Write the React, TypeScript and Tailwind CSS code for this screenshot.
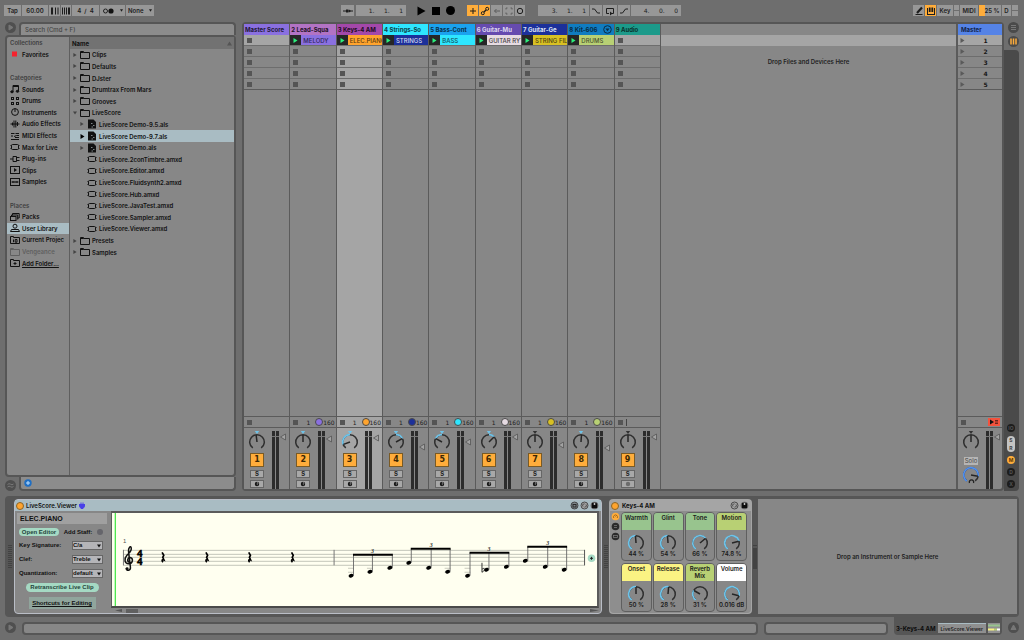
import React from 'react';
import clsx from 'clsx';

interface Track {
  name: string;
  color: string;
  text: string;
  clip?: string;
  clipBg?: string;
  clipText?: string;
  dot?: string;
  pan: number;
  blue: boolean;
  fader: number;
}

const TRACKS: Track[] = [
  { name: 'Master Score', color: 'bg-[#8a70e0]', text: 'text-[#1e1834]', pan: -7, blue: true, fader: 6 },
  { name: '2 Lead-Squa', color: 'bg-[#b273c4]', text: 'text-[#241428]', clip: 'MELODY', clipBg: 'bg-[#8a70e0]', clipText: 'text-[#2f2658]', dot: 'bg-[#8a70e0]', pan: 0, blue: true, fader: 8 },
  { name: '3 Keys-4 AM', color: 'bg-[#a348aa]', text: 'text-[#200c22]', clip: 'ELEC.PIANO', clipBg: 'bg-[#ffa42e]', clipText: 'text-[#59390f]', dot: 'bg-[#ffa42e]', pan: -110, blue: true, fader: 7 },
  { name: '4 Strings-So', color: 'bg-[#2ee6ff]', text: 'text-[#0d3f48]', clip: 'STRINGS', clipBg: 'bg-[#1c309a]', clipText: 'text-[#d5d9ee]', dot: 'bg-[#1c309a]', pan: 62, blue: true, fader: 16 },
  { name: '5 Bass-Cont', color: 'bg-[#1ba2ee]', text: 'text-[#0a3048]', clip: 'BASS', clipBg: 'bg-[#2ee6ff]', clipText: 'text-[#13535d]', dot: 'bg-[#2ee6ff]', pan: -62, blue: true, fader: 11 },
  { name: '6 Guitar-Mu', color: 'bg-[#664baf]', text: 'text-[#ddd8ee]', clip: 'GUITAR RYT', clipBg: 'bg-[#e6dbe2]', clipText: 'text-[#463f44]', dot: 'bg-[#e6dbe2]', pan: 45, blue: true, fader: 6 },
  { name: '7 Guitar-Ge', color: 'bg-[#1c309a]', text: 'text-[#dfe3f5]', clip: 'STRING FILL', clipBg: 'bg-[#d8c023]', clipText: 'text-[#4c440f]', dot: 'bg-[#d8c023]', pan: 0, blue: false, fader: 14 },
  { name: '8 Kit-606', color: 'bg-[#107cc0]', text: 'text-[#062c45]', clip: 'DRUMS', clipBg: 'bg-[#b8d074]', clipText: 'text-[#485330]', dot: 'bg-[#b8d074]', pan: 4, blue: true, fader: 17 },
  { name: '9 Audio', color: 'bg-[#1c9a8a]', text: 'text-[#08302b]', pan: 0, blue: false, fader: 6 },
];

const MACROS = [
  { name: 'Warmth', color: 'bg-[#98c48e]', value: '44 %', angle: -4 },
  { name: 'Glint', color: 'bg-[#98c48e]', value: '54 %', angle: -4 },
  { name: 'Tone', color: 'bg-[#98c48e]', value: '66 %', angle: 50 },
  { name: 'Motion', color: 'bg-[#b8d074]', value: '74.8 %', angle: 75 },
  { name: 'Onset', color: 'bg-[#faf383]', value: '50 %', angle: 0 },
  { name: 'Release', color: 'bg-[#faf383]', value: '28 %', angle: 5 },
  { name: 'Reverb Mix', color: 'bg-[#b8d074]', value: '31 %', angle: -60 },
  { name: 'Volume', color: 'bg-white', value: '0.016 dB', angle: 105 },
];

type SideRow = { label: string; icon?: string; kind?: 'head' | 'selected' | 'dim' | 'link' } | null;

const SIDEBAR: SideRow[] = [
  { label: 'Collections', kind: 'head' },
  { label: 'Favorites', icon: 'fav' },
  null,
  { label: 'Categories', kind: 'head' },
  { label: 'Sounds', icon: 'notes' },
  { label: 'Drums', icon: 'drums' },
  { label: 'Instruments', icon: 'clock' },
  { label: 'Audio Effects', icon: 'wave' },
  { label: 'MIDI Effects', icon: 'midi' },
  { label: 'Max for Live', icon: 'max' },
  { label: 'Plug-ins', icon: 'plug' },
  { label: 'Clips', icon: 'clip' },
  { label: 'Samples', icon: 'sample' },
  null,
  { label: 'Places', kind: 'head' },
  { label: 'Packs', icon: 'packs' },
  { label: 'User Library', icon: 'user', kind: 'selected' },
  { label: 'Current Projec', icon: 'project' },
  { label: 'Vengeance', icon: 'folder', kind: 'dim' },
  { label: 'Add Folder...', icon: 'add', kind: 'link' },
];

const FILES = [
  { label: 'Clips', type: 'folder' },
  { label: 'Defaults', type: 'folder' },
  { label: 'DJster', type: 'folder' },
  { label: 'Drumtrax From Mars', type: 'folder' },
  { label: 'Grooves', type: 'folder' },
  { label: 'LiveScore', type: 'open' },
  { label: 'LiveScore Demo-9.5.als', type: 'set' },
  { label: 'LiveScore Demo-9.7.als', type: 'set', selected: true },
  { label: 'LiveScore Demo.als', type: 'set' },
  { label: 'LiveScore.2conTimbre.amxd', type: 'max' },
  { label: 'LiveScore.Editor.amxd', type: 'max' },
  { label: 'LiveScore.Fluidsynth2.amxd', type: 'max' },
  { label: 'LiveScore.Hub.amxd', type: 'max' },
  { label: 'LiveScore.JavaTest.amxd', type: 'max' },
  { label: 'LiveScore.Sampler.amxd', type: 'max' },
  { label: 'LiveScore.Viewer.amxd', type: 'max' },
  { label: 'Presets', type: 'folder' },
  { label: 'Samples', type: 'folder' },
];

const ICONS: Record<string, React.ReactNode> = {
  fav: <rect x="2" y="2.500" width="5" height="5" fill="#f5222d" stroke="none" />,
  notes: (
    <>
      <path d="M3 7.500V1.500H8.500V7" />
      <path d="M3 2.500H8.500" />
      <ellipse cx="2" cy="7.800" rx="1.300" ry="1" fill="currentColor" />
      <ellipse cx="7.500" cy="7.300" rx="1.300" ry="1" fill="currentColor" />
    </>
  ),
  drums: (
    <>
      <rect x="1.500" y="1.500" width="2" height="2" />
      <rect x="6.500" y="1.500" width="2" height="2" />
      <rect x="1.500" y="6.500" width="2" height="2" />
      <rect x="6.500" y="6.500" width="2" height="2" />
    </>
  ),
  clock: (
    <>
      <circle cx="5" cy="5" r="3.400" />
      <path d="M5 1.500V5" />
    </>
  ),
  wave: <path d="M0.500 5H9.500M2.500 3.500V6.500M4 1.500V8.500M5.800 1.500V8.500M7.500 3V7" />,
  midi: <path d="M1 2.500H4.500M5.500 2.500H9M1 5H3M4 5.500L6.500 4.500H9M1 8.500H9M5 6.500H9" />,
  max: (
    <>
      <rect x="1.500" y="2.500" width="7" height="5" rx="1" />
      <path d="M0.500 3.500H1.500M0.500 6.500H1.500M8.500 3.500H9.500M8.500 6.500H9.500" />
    </>
  ),
  plug: <path d="M0 5H3M3 2.500H6.500V7.500H3ZM6.500 3.500H9.500M6.500 6.500H9.500" />,
  clip: (
    <>
      <rect x="0.500" y="1.500" width="9" height="7" />
      <path d="M4 3L7 5L4 7Z" fill="currentColor" stroke="none" />
    </>
  ),
  sample: (
    <>
      <rect x="0.500" y="1.500" width="9" height="7" />
      <path d="M1.500 5H8.500M3 4V6M5 4.500V5.500M7 4V6" />
    </>
  ),
  packs: (
    <>
      <path d="M2.500 3.500V1.500H9.200V6H7.500" />
      <path d="M1.500 4.500V3H7.700V7.500" />
      <rect x="0.500" y="4.500" width="5.500" height="4" />
    </>
  ),
  user: (
    <>
      <circle cx="5" cy="3.200" r="2" />
      <path d="M0.500 8.500H9.500L8.500 6.500H1.500Z" />
    </>
  ),
  project: (
    <>
      <path d="M0.500 8.500V1.500H3.500V2.500H9.500V8.500Z" />
      <path d="M3.500 4.500V7.200M5.200 4.500H7V7.200H5.200Z" />
    </>
  ),
  folder: <path d="M0.500 8.500V1.500H3.500V2.500H9.500V8.500ZM0.500 2.500H3.500" />,
  add: (
    <>
      <path d="M0.500 8.500V1.500H3.500V2.500H9.500V8.500Z" />
      <path d="M5 4V7M3.500 5.500H6.500" />
    </>
  ),
  set: (
    <>
      <path d="M1 0.500H6.500L9 3V9.500H1Z" fill="currentColor" stroke="none" />
      <path d="M4 4.500H5.500M6 6.500H7.500M4.500 8H6" stroke="#7f8688" />
    </>
  ),
};

function Icon({ name, className }: { name: string; className?: string }) {
  return (
    <svg viewBox="0 0 10 10" className={clsx('size-[10px] shrink-0', className)} fill="none" stroke="currentColor" strokeWidth="1" aria-hidden="true">
      {ICONS[name]}
    </svg>
  );
}

function Arrow({ open, className, size = 'size-[5px]' }: { open?: boolean; className?: string; size?: string }) {
  return (
    <svg viewBox="0 0 5 5" className={clsx('shrink-0', size, className)} fill="currentColor" aria-hidden="true">
      <path d={open ? 'M0 0.500H5L2.500 4.500Z' : 'M0.500 0L4.500 2.500L0.500 5Z'} />
    </svg>
  );
}

const point = (angle: number, r: number, c = 10) => {
  const a = (angle * Math.PI) / 180;
  return `${(c + r * Math.sin(a)).toFixed(2)} ${(c - r * Math.cos(a)).toFixed(2)}`;
};

const arc = (from: number, to: number, r: number) =>
  `M${point(from, r)}A${r} ${r} 0 ${to - from > 180 ? 1 : 0} 1 ${point(to, r)}`;

interface KnobProps {
  label: string;
  angle: number;
  bipolar?: boolean;
  marker?: string;
  color?: string;
}

function Knob({ label, angle, bipolar, marker, color = '#6fc3e8' }: KnobProps) {
  const start = bipolar ? Math.min(0, angle) : -145;
  const end = bipolar ? Math.max(0, angle) : angle;
  return (
    <label className="relative block size-5">
      <svg viewBox="0 0 20 20" className="size-5 overflow-visible" fill="none" strokeWidth="1.500">
        <path d={arc(-145, 145, 7.3)} stroke="#2f2f2f" />
        {end - start > 8 && <path d={arc(start, end, 7.3)} stroke={color} strokeWidth="1.700" />}
        <path d={`M10 10L${point(angle, 7)}`} stroke="#262626" />
        {marker && <path d="M7.800 -1H12.200L10 2Z" fill={marker} />}
      </svg>
      <input type="range" min={-145} max={145} defaultValue={angle} aria-label={label} className="absolute inset-0 size-5 cursor-pointer opacity-0" />
    </label>
  );
}

function Meter({ fader }: { fader: number }) {
  return (
    <svg viewBox="0 0 15 58" className="h-[58px] w-[15px]" aria-hidden="true">
      <rect width="3" height="58" fill="#2c2c2c" />
      <rect x="4" width="3" height="58" fill="#2c2c2c" />
      <path d="M0 5.500H7" stroke="#777" />
      <path d={`M8.500 ${fader}L13.500 ${fader - 3}V${fader + 3}Z`} fill="#a2a2a2" stroke="#555" strokeWidth="0.800" />
    </svg>
  );
}

function StopSquare() {
  return <span className="block size-[5px] shrink-0 bg-[#555]" />;
}

function TrackColumn({ track, index }: { track: Track; index: number }) {
  const selected = index === 2;
  return (
    <section className={clsx('flex min-w-0 flex-col border-r border-[#5b5b5b]', selected ? 'bg-[#a5a5a5]' : 'bg-[#878787]')}>
      <h2 className={clsx('flex h-[11px] items-center overflow-hidden whitespace-nowrap pl-px font-bold', track.color, track.text)}>
        <span className="flex-1">{track.name}</span>
        {index === 7 && (
          <svg viewBox="0 0 9 9" className="mr-0.5 size-[9px]" fill="none" stroke="#0b2c44" aria-hidden="true">
            <circle cx="4.500" cy="4.500" r="3.800" />
            <path d="M2.500 3.500H6.500L4.500 6.200Z" fill="#0b2c44" stroke="none" />
          </svg>
        )}
      </h2>
      {[0, 1, 2, 3, 4].map(row => (
        <div key={row} className={clsx('flex h-[11px] items-center border-b', row === 4 ? 'border-[#5b5b5b]' : 'border-[#6d6d6d]', row === 0 && 'bg-[#a5a5a5]')}>
          {row === 0 && track.clip ? (
            <button className="flex h-full w-full min-w-0 items-center text-left">
              <span className="flex h-full w-[11px] shrink-0 items-center justify-center bg-[#262626]">
                <Arrow className="text-[#2bf07c]" />
              </span>
              <span className={clsx('flex h-full min-w-0 flex-1 items-center overflow-hidden whitespace-nowrap pl-0.5 font-medium', track.clipBg, track.clipText)}>
                {track.clip}
              </span>
            </button>
          ) : (
            <button aria-label="Stop clip" className="pl-[3px]">
              <StopSquare />
            </button>
          )}
        </div>
      ))}
      <div className="flex-1" />
      <div className="flex h-3 items-center border-y border-[#5b5b5b] pl-[3px]">
        <StopSquare />
        {track.dot && (
          <div className="flex flex-1 items-center justify-end pr-px font-['DejaVu_Sans',sans-serif] text-[#1d1d1d]">
            <span className="pr-[5px]">1</span>
            <span className={clsx('size-2 shrink-0 rounded-full border border-[#4a4a4a]', track.dot)} />
            <span>160</span>
          </div>
        )}
        {index === 8 && <span className="ml-[3px] h-[7px] w-px bg-[#444]" />}
      </div>
      <div className="flex h-[61px] gap-[5px] pl-[3px] pt-[3px]">
        <div className="flex w-5 flex-col items-center pt-px">
          <Knob label={`${track.name} pan`} angle={track.pan} bipolar marker={track.blue ? '#6fc3e8' : '#333'} />
          <button className="mt-px h-3.5 w-3.5 shrink-0 border border-[#7a5a24] bg-[#ffad3b] font-['DejaVu_Sans',sans-serif] text-[8px] font-bold leading-3 text-[#3b2704]">
            {index + 1}
          </button>
          <button className="mt-[3px] h-2 w-3.5 shrink-0 border border-[#666] bg-[#a8a8a8] text-[6px] font-bold leading-[6px] text-[#222]">S</button>
          <button aria-label="Arm" className="mt-0.5 flex h-2 w-3.5 shrink-0 items-center justify-center border border-[#666] bg-[#a8a8a8]">
            <svg viewBox="0 0 6 6" className="size-[6px]">
              <circle cx="3" cy="3" r="2.200" fill={index === 8 ? '#6c6c6c' : '#151515'} />
              {index !== 8 && <path d="M3.300 1.300V4.200M3.300 1.500L4.500 2.300" stroke="#aaa" strokeWidth="0.600" />}
            </svg>
          </button>
        </div>
        <Meter fader={track.fader} />
      </div>
    </section>
  );
}

function MasterColumn() {
  return (
    <section className="flex w-[46px] shrink-0 flex-col border-l-2 border-[#5b5b5b]">
      <h2 className="flex h-[11px] items-center bg-[#5583e6] pl-[3px] font-bold text-[#13244a]">Master</h2>
      {[1, 2, 3, 4, 5].map(scene => (
        <button key={scene} className={clsx('flex h-[11px] items-center border-b pl-0.5 text-[#161616]', scene === 5 ? 'border-[#5b5b5b]' : 'border-[#6d6d6d]', scene === 1 && 'bg-[#a5a5a5]')}>
          <Arrow className="text-[#5a5a5a]" />
          <span className="flex-1 pl-1 text-center font-['DejaVu_Sans',sans-serif] font-bold">{scene}</span>
        </button>
      ))}
      <div className="flex-1" />
      <div className="flex h-3 items-center justify-between border-y border-[#5b5b5b] pl-[3px] pr-0.5">
        <StopSquare />
        <button aria-label="Back to arrangement" className="flex h-2 w-3 items-center justify-center bg-[#f4523d]">
          <svg viewBox="0 0 10 6" className="h-1.5 w-2.5">
            <path d="M1 0.500L5 3L1 5.500Z" fill="#111" />
            <path d="M6 1.500H9M6 3H9M6 4.500H9" stroke="#4b1a14" strokeWidth="0.800" />
          </svg>
        </button>
      </div>
      <div className="flex h-[61px] gap-[5px] pl-[3px] pt-[3px]">
        <div className="flex w-5 flex-col items-center pt-px">
          <Knob label="Master pan" angle={0} bipolar marker="#333" />
          <button className="mt-[5px] h-2 w-3.5 shrink-0 bg-[#b5b5b5] text-[6px] leading-[8px] text-[#444]">Solo</button>
          <div className="relative">
            <Knob label="Cue volume" angle={100} color="#4f8ff0" />
            <svg viewBox="0 0 7 7" className="absolute bottom-0 left-[7px] size-[7px]" aria-hidden="true">
              <path d="M1.500 5A2.200 2.200 0 1 1 5.500 5" fill="none" stroke="#222" strokeWidth="1.300" />
            </svg>
          </div>
        </div>
        <Meter fader={6} />
      </div>
    </section>
  );
}

function RoundIcon({ children, className, label }: { children: React.ReactNode; className?: string; label: string }) {
  return (
    <button aria-label={label} className={clsx('size-[11px] shrink-0 rounded-full', className)}>
      <svg viewBox="0 0 11 11" className="size-[11px]" fill="none" stroke="currentColor">
        {children}
      </svg>
    </button>
  );
}

function HotSwap({ className }: { className?: string }) {
  return (
    <RoundIcon label="Hot-swap" className={className}>
      <circle cx="5.500" cy="5.500" r="3.500" fill="#a5a5a5" stroke="#333" strokeWidth="0.800" />
      <path d="M4 6.500A1.700 1.700 0 0 1 5.500 3.800M7 4.500A1.700 1.700 0 0 1 5.500 7.200" stroke="#333" strokeWidth="0.900" />
    </RoundIcon>
  );
}

function Save() {
  return (
    <RoundIcon label="Save" className="-ml-px">
      <circle cx="5.500" cy="5.500" r="3.800" fill="#5c5c5c" stroke="none" />
      <path d="M3 3H7.500L8 3.500V8H3Z" fill="#0c0c0c" stroke="none" />
      <path d="M5.500 3V5" stroke="#c4c4c4" strokeWidth="1.500" />
    </RoundIcon>
  );
}

function ToolButton({ children, className, label, lit }: { children: React.ReactNode; className?: string; label?: string; lit?: boolean }) {
  return (
    <button aria-label={label} className={clsx('flex h-[11px] shrink-0 items-center justify-center', lit ? 'bg-[#ffad3b]' : 'bg-[#979797]', className)}>
      {children}
    </button>
  );
}

function Glyph({ children }: { children: React.ReactNode }) {
  return (
    <svg viewBox="0 0 10 10" className="size-[10px]" fill="none" stroke="currentColor" aria-hidden="true">
      {children}
    </svg>
  );
}

function Toolbar() {
  const field = "h-[11px] shrink-0 bg-[#979797] px-[3px] text-right font-['DejaVu_Sans',sans-serif] font-normal outline-none";
  return (
    <header className="grid h-[21px] shrink-0 grid-cols-[1fr_auto_1fr] items-center pl-1 pr-1.5 font-semibold text-[#1d1d1d]">
      <div className="flex gap-px">
        <ToolButton className="w-[17px]">Tap</ToolButton>
        <input aria-label="Tempo" defaultValue="60.00" className="h-[11px] w-[26px] bg-[#979797] text-center outline-none" />
        <ToolButton className="w-[11px]" label="Nudge down">
          <Glyph><path d="M2 1.500V8.500" strokeWidth="2" /><path d="M5.500 1.500V8.500M8 1.500V8.500" /></Glyph>
        </ToolButton>
        <ToolButton className="w-2.5" label="Nudge up">
          <Glyph><path d="M1.500 1.500V8.500M3.500 1.500V8.500M5.500 1.500V8.500" /><path d="M8 1.500V8.500" strokeWidth="2" /></Glyph>
        </ToolButton>
        <input aria-label="Time signature" defaultValue="4  /  4" className="h-[11px] w-[27px] bg-[#979797] text-center outline-none" />
        <ToolButton className="w-[25px] gap-1.5" label="Metronome">
          <svg viewBox="0 0 11 6" className="h-1.5 w-[11px]"><circle cx="2.500" cy="3" r="2" fill="none" stroke="#222" /><circle cx="8" cy="3" r="2.600" fill="#111" /></svg>
          <Arrow open size="size-[3px]" />
        </ToolButton>
        <div className="flex h-[11px] items-center bg-[#979797] pr-0.5">
          <select aria-label="Quantization" className="h-[11px] w-[23px] appearance-none pl-0.5 outline-none">
            <option>None</option>
          </select>
          <Arrow open size="size-[3px]" />
        </div>
      </div>

      <div className="flex items-center">
        <ToolButton className="w-[13px]" label="Follow"><Glyph><path d="M0 5H10" /><path d="M3 5H5.500" strokeWidth="3" /><path d="M8 5L6 3.500V6.500Z" fill="currentColor" stroke="none" /></Glyph></ToolButton>
        <input aria-label="Position" defaultValue="1.     1.     1" className={clsx(field, 'ml-0.5 w-[50px]')} />
        <button aria-label="Play" className="ml-[11px]"><svg viewBox="0 0 9 10" className="h-2.5 w-[9px]"><path d="M0.500 0.500L8.500 5L0.500 9.500Z" fill="#000" /></svg></button>
        <button aria-label="Stop" className="ml-1.5 size-2 bg-black" />
        <button aria-label="Record" className="ml-1.5 size-[9px] rounded-full bg-black" />
        <div className="ml-3 flex gap-px">
          <ToolButton lit className="w-[11px]" label="Overdub"><Glyph><path d="M5 2V8M2 5H8" /></Glyph></ToolButton>
          <ToolButton lit className="w-[11px]" label="Automation arm"><Glyph><circle cx="2.800" cy="7.200" r="1.500" /><circle cx="7.200" cy="2.800" r="1.500" /><path d="M4 6L6 4" strokeWidth="1.500" /></Glyph></ToolButton>
          <ToolButton className="w-[11px] text-[#5c5c5c]" label="Re-enable automation"><Glyph><path d="M8 5H2.500M4.500 3L2.500 5L4.500 7" /></Glyph></ToolButton>
          <ToolButton className="w-[11px] text-[#5c5c5c]" label="Capture"><Glyph><path d="M2 3.500V2H3.500M6.500 2H8V3.500M8 6.500V8H6.500M3.500 8H2V6.500" /></Glyph></ToolButton>
          <ToolButton className="w-2.5" label="Session record"><Glyph><circle cx="5" cy="5" r="2.700" /></Glyph></ToolButton>
        </div>
        <input aria-label="Loop start" defaultValue="3.     1.     1" className={clsx(field, 'ml-[13px] w-[51px]')} />
        <div className="flex gap-px pl-px">
          <ToolButton className="w-3" label="Punch in"><Glyph><path d="M1 3H3.500L6.500 7H9" /></Glyph></ToolButton>
          <ToolButton className="w-3.5" label="Loop"><Glyph><path d="M4 7.500H1.500V2.500H8.500V7.500H6" /><path d="M5 5.500V9.500L7.500 7.500Z" fill="currentColor" stroke="none" /></Glyph></ToolButton>
          <ToolButton className="w-3" label="Punch out"><Glyph><path d="M1 7H3.500L6.500 3H9" /></Glyph></ToolButton>
          <input aria-label="Loop length" defaultValue="4.     0.     0" className={clsx(field, 'w-[50px]')} />
        </div>
      </div>

      <div className="flex justify-end gap-px">
        <ToolButton className="w-[11px]" label="Draw mode"><Glyph><path d="M3 7L8 1.500" strokeWidth="2.200" /><path d="M1.500 8.500H8.500" /></Glyph></ToolButton>
        <ToolButton lit className="w-[11px]" label="Computer keyboard"><Glyph><path d="M1.500 8.500V2M8.500 8.500V2M1 8.500H9" /><path d="M3.700 1.500V6M6.300 1.500V6" strokeWidth="1.800" /></Glyph></ToolButton>
        <ToolButton className="w-4">Key</ToolButton>
        <span className="flex h-[11px] w-[5px] flex-col justify-center bg-[#979797]"><span className="h-px bg-[#6e6e6e]" /></span>
        <ToolButton className="w-[18px]">MIDI</ToolButton>
        <span className="flex h-[11px] w-[22px] items-center justify-center bg-linear-to-r from-[#ffad3b] from-25% to-[#979797] to-25% pl-1">25 %</span>
        <ToolButton className="w-[9px]">D</ToolButton>
        <span className="flex h-[11px] w-1.5 flex-col justify-center bg-[#979797]"><span className="h-px bg-[#6e6e6e]" /></span>
      </div>
    </header>
  );
}

function Browser() {
  return (
    <aside className="flex w-[231px] shrink-0 flex-col">
      <div className="flex h-[13px] shrink-0 justify-between">
        <RoundIcon label="Preview" className="bg-[#4f4f4f] text-[#777]"><path d="M4 3L8 5.500L4 8Z" fill="currentColor" /></RoundIcon>
        <div className="w-[217px] rounded-t-sm border-2 border-b-0 border-[#565656] bg-[#8c8c8c]">
          <input aria-label="Search" placeholder="Search (Cmd + F)" className="block h-[11px] w-full bg-transparent pl-1 font-medium outline-none placeholder:text-[#454545]" />
        </div>
      </div>
      <div className="flex flex-1 rounded-sm border-2 border-[#565656] bg-[#878787] font-semibold">
        <nav className="w-[63px] shrink-0 border-r border-[#5f5f5f]">
          <ul className="grid h-[232px] auto-rows-fr">
            {SIDEBAR.map((row, i) => (
              <li key={i}>
                {row && (
                  <a
                    href="#"
                    className={clsx(
                      'flex h-full items-center overflow-hidden whitespace-nowrap pl-[3px]',
                      row.kind === 'head' && 'text-[#3f3f3f]',
                      row.kind === 'selected' && 'bg-[#a9bcc3] text-[#111]',
                      row.kind === 'dim' && 'text-[#606060]',
                      row.kind === 'link' && 'text-[#111]',
                      !row.kind && 'text-[#111]'
                    )}
                  >
                    {row.icon && <Icon name={row.icon} className="mr-0.5" />}
                    <span className={clsx(row.kind === 'link' && 'underline underline-offset-1')}>{row.label}</span>
                  </a>
                )}
              </li>
            ))}
          </ul>
        </nav>
        <div className="min-w-0 flex-1">
          <div className="flex h-3 items-center justify-between bg-[#727272] px-0.5 font-bold text-[#111]">
            Name
            <svg viewBox="0 0 5 5" className="size-[5px]"><path d="M0 4.500L2.500 0.500L5 4.500Z" fill="#555" /></svg>
          </div>
          <ul className="grid h-[209px] auto-rows-fr">
            {FILES.map(file => {
              const nested = file.type === 'set' || file.type === 'max';
              return (
                <li key={file.label} className={clsx('flex items-center text-[#111]', nested ? 'pl-2.5' : 'pl-[3px]', file.selected && 'bg-[#a9bcc3]')}>
                  {file.type === 'max' ? (
                    <span className="w-[5px]" />
                  ) : (
                    <Arrow open={file.type === 'open'} size={file.selected ? 'size-[5px]' : 'size-1 mr-px'} className={file.selected ? 'text-black' : 'text-[#444]'} />
                  )}
                  <Icon name={nested ? file.type : 'folder'} className={nested ? 'mx-0.5' : 'mx-0.5'} />
                  <span>{file.label}</span>
                </li>
              );
            })}
          </ul>
        </div>
      </div>
      <div className="flex h-3.5 shrink-0 items-end justify-between">
        <RoundIcon label="Groove pool" className="bg-[#4f4f4f] text-[#777]">
          <path d="M2.500 4.500Q4 3 5.500 4.200T8.500 4M2.500 7Q4 5.500 5.500 6.700T8.500 6.500" />
        </RoundIcon>
        <div className="flex h-full w-[217px] items-center rounded-b-sm border-2 border-t-0 border-[#565656] bg-[#8c8c8c] pl-[3px]">
          <svg viewBox="0 0 8 8" className="size-2"><circle cx="4" cy="4" r="3.700" fill="#1f6fc4" /><path d="M4 2V6M2 4H6" stroke="#bfe0ff" /></svg>
        </div>
      </div>
    </aside>
  );
}

function Session() {
  return (
    <main className="ml-1.5 flex min-w-0 flex-1 rounded-sm border-2 border-[#565656] bg-[#878787]">
      <div className="grid w-[417px] shrink-0 grid-cols-9">
        {TRACKS.map((track, i) => (
          <TrackColumn key={track.name} track={track} index={i} />
        ))}
      </div>
      <div className="min-w-0 flex-1 pt-[11px]">
        <div className="h-[11px] bg-[#a5a5a5]" />
        <p className="pt-[11px] text-center font-semibold text-[#1f1f1f]">Drop Files and Devices Here</p>
      </div>
      <MasterColumn />
    </main>
  );
}

function RightStrip() {
  const dark = 'bg-[#1d1d1d] text-[#555]';
  const toggles = [
    { t: 'IO', c: clsx(dark, 'rounded-full mb-1') },
    { t: 'S', c: 'bg-[#c4c4c4] text-[#444] rounded-t-full' },
    { t: 'R', c: 'bg-[#c4c4c4] text-[#444] rounded-b-full mb-1' },
    { t: 'M', c: 'bg-[#ffad3b] text-[#5c3a06] rounded-full mb-1' },
    { t: 'D', c: clsx(dark, 'rounded-full mb-1') },
    { t: 'X', c: clsx(dark, 'rounded-full') },
  ];
  return (
    <div className="flex w-[15px] shrink-0 flex-col">
      <div className="flex h-7 flex-col items-end gap-[3px]">
        <RoundIcon label="Arrangement view" className="bg-[#4a4a4a] text-[#777]"><path d="M3 3.500H8M3 5.500H8M3 7.500H8" /></RoundIcon>
        <RoundIcon label="Session view" className="bg-[#4a4a4a] text-[#ffad3b]"><path d="M3 2.500V8.500M5.500 2.500V8.500M8 2.500V8.500" strokeWidth="1.500" /></RoundIcon>
      </div>
      <div className="flex flex-1 flex-col items-center justify-end rounded-r-sm bg-[#4a4a4a] pb-[3px] pr-px">
        {toggles.map(({ t, c }) => (
          <button key={t} className={clsx('h-2 w-2 text-[5px] font-bold leading-[8px]', c)}>{t}</button>
        ))}
      </div>
    </div>
  );
}

const STAFF = [37, 41, 44, 48, 52];
const GROUPS = [
  { beam: 42, notes: [[240, 63], [259, 59], [279, 55]] },
  { beam: 36, notes: [[298, 50], [318, 55], [337, 59]] },
  { beam: 40, notes: [[357, 63], [376, 57], [396, 54]] },
  { beam: 34, notes: [[415, 48], [435, 54], [454, 57]] },
];

function Score() {
  return (
    <svg viewBox="0 0 487 95" preserveAspectRatio="xMinYMin slice" className="h-full w-full" fill="none" role="img" aria-label="Score">
      <path d="M2.500 0V95" stroke="#c5f7c0" />
      <path d="M3.500 0V95" stroke="#4be84b" />
      {STAFF.map(y => (
        <path key={y} d={`M11 ${y + 0.5}H475`} stroke="#c3c5b8" />
      ))}
      <path d="M11.500 37V52.500M223 37V52.500" stroke="#777" />
      <path d="M474.500 37V52.500" stroke="#555" />
      <text x="11" y="30" fontSize="6" fill="#555" fontFamily="Liberation Sans, sans-serif">1</text>
      {/* treble clef */}
      <path d="M17.500 49.500C14.800 48.600 15.400 44.500 18.200 44.800C21.500 45.200 21.400 50.800 17 51C12.500 51.200 11.800 46 15 42.500C17.500 39.800 20 38 19.300 35C18.700 32.600 16.300 34.500 16.600 38.500L18.500 54.500C18.800 58 14.600 58.600 14.300 56" stroke="#111" strokeWidth="1.500" strokeLinecap="round" />
      <circle cx="15.200" cy="56" r="1.500" fill="#111" />
      <text fontSize="11" fontWeight="bold" fill="#000" stroke="#000" strokeWidth="0.500" fontFamily="Liberation Serif, serif">
        <tspan x="25" y="44.500">4</tspan>
        <tspan x="25" y="52.500">4</tspan>
      </text>
      {[51, 95, 138, 181].map(x => (
        <path key={x} d={`M${x - 0.7} 39.500L${x + 1} 42.500L${x} 44.500L${x + 1.2} 47.200C${x - 1} 46.500 ${x - 1.2} 48 ${x + 0.2} 49.500`} stroke="#000" strokeWidth="1.700" />
      ))}
      {GROUPS.map(({ beam, notes }) => (
        <g key={beam}>
          {notes.map(([x, y]) => (
            <g key={x}>
              {y >= 55 && <path d={`M${x - 3} 55.500H${x + 3}`} stroke="#c9cbbd" />}
              {y >= 59 && <path d={`M${x - 3} 59.500H${x + 3}`} stroke="#c9cbbd" />}
              <path d={`M${x + 2.5} ${y}V${beam}`} stroke="#666" strokeWidth="0.900" />
              <ellipse cx={x} cy={y} rx="2.500" ry="1.800" fill="#000" transform={`rotate(-20 ${x} ${y})`} />
            </g>
          ))}
          <path d={`M${notes[0][0] + 2} ${beam}H${notes[2][0] + 3}`} stroke="#000" strokeWidth="2" />
          <text x={notes[1][0] + 1} y={beam - 2} fontSize="6" fontStyle="italic" fontWeight="bold" fill="#333" fontFamily="Liberation Serif, serif">3</text>
        </g>
      ))}
      <path d="M371.500 50V59.500C375 58 374.500 54 371.500 56.500" stroke="#222" strokeWidth="0.900" />
      <circle cx="481.500" cy="45.500" r="3.800" fill="#a5d9c3" />
      <path d="M481.500 44V47M480 45.500H483" stroke="#222" />
    </svg>
  );
}

function ViewerDevice() {
  const selects = [
    { id: 'key', label: 'Key Signature:', value: 'C/a' },
    { id: 'clef', label: 'Clef:', value: 'Treble' },
    { id: 'quant', label: 'Quantization:', value: 'default' },
  ];
  return (
    <section className="flex min-w-0 flex-1 flex-col rounded-sm border border-[#b9bdc6] bg-[#878787]">
      <div className="flex h-[11px] shrink-0 items-center bg-[#a9bcc3] px-px font-semibold text-[#111]">
        <button aria-label="Device on" className="mr-0.5 size-2 rounded-full border border-[#8b6426] bg-[#ffa42e]" />
        LiveScore.Viewer
        <svg viewBox="0 0 6 7" className="ml-0.5 h-[7px] w-1.5"><path d="M0.500 2V4.500L2 6.500H4L5.500 4.500V2M2 0.500V4M4 0.500V4" stroke="#4840e8" fill="#4840e8" /></svg>
        <div className="ml-auto flex">
          <RoundIcon label="Edit">
            <circle cx="5.500" cy="5.500" r="3.500" fill="#7c8488" stroke="#333" strokeWidth="0.800" />
            <rect x="4" y="4.500" width="3" height="2.500" stroke="#222" strokeWidth="0.900" />
          </RoundIcon>
          <HotSwap className="-ml-px" />
          <Save />
        </div>
      </div>
      <div className="flex min-h-0 flex-1 pr-0.5">
        <div className="flex w-[96px] shrink-0 flex-col pl-0.5 pr-1 pt-0.5 font-['Liberation_Sans',sans-serif] font-bold text-[#111]">
          <h3 className="flex h-[11px] items-center bg-[#a0a0a0] pl-[3px] text-[7px]">ELEC.PIANO</h3>
          <div className="mt-1 flex items-center justify-between pl-0.5 pr-1">
            <button className="h-2 w-10 rounded-full bg-[#a5d9c3] text-[6px] leading-[8px] text-[#24443a]">Open Editor</button>
            <label htmlFor="add-staff" className="text-[6px] leading-[8px]">Add Staff:</label>
            <input id="add-staff" type="checkbox" className="size-1.5 appearance-none rounded-full bg-[#65656b]" />
          </div>
          <div className="mt-[5px] flex flex-col gap-[5px] pl-0.5 pr-1">
            {selects.map(({ id, label, value }) => (
              <div key={id} className="flex items-center justify-between text-[6px] leading-[9px]">
                <label htmlFor={id}>{label}</label>
                <span className="flex h-[9px] w-[31px] items-center border border-[#666] bg-[#b5b5b8]">
                  <select id={id} className="h-full min-w-0 flex-1 appearance-none text-[6px] leading-[7px] outline-none">
                    <option>{value}</option>
                  </select>
                  <Arrow open size="size-1" className="mr-px" />
                </span>
              </div>
            ))}
          </div>
          <button className="mx-auto mt-[5px] h-[9px] w-[73px] rounded-full bg-[#a5d9c3] text-[6px] leading-[9px] text-[#24443a]">Retranscribe Live Clip</button>
          <button className="mx-auto mt-[5px] h-3 w-[67px] bg-[#90a59c] text-[6px] leading-3 underline underline-offset-1">Shortcuts for Editing</button>
        </div>
        <div className="flex min-w-0 flex-1 flex-col">
          <div className="min-h-0 flex-1 border-2 border-l border-[#5b5b5b] border-b-[#4a4a4a] bg-[#fffff0]">
            <Score />
          </div>
          <div className="flex h-[5px] items-center justify-between pl-1">
            <span className="flex items-center gap-1">
              <svg viewBox="0 0 7 3" className="h-[3px] w-[7px]"><path d="M0 1.500L7 0V3Z" fill="#555" /></svg>
              <span className="h-1 w-3 bg-[#606060]" />
            </span>
            <svg viewBox="0 0 9 3" className="h-[3px] w-[9px]"><path d="M9 1.500L0 0V3Z" fill="#555" /></svg>
          </div>
        </div>
      </div>
    </section>
  );
}

function RackDevice() {
  return (
    <section className="flex w-[143px] shrink-0 flex-col rounded-sm bg-[#a5a5a5] p-px">
      <div className="flex h-[11px] shrink-0 items-center px-px font-bold text-[#111]">
        <button aria-label="Device on" className="mr-[3px] size-2 rounded-full border border-[#8b6426] bg-[#ffa42e]" />
        Keys-4 AM
        <HotSwap className="ml-auto" />
        <Save />
      </div>
      <div className="flex flex-1 rounded-b-sm bg-[#8e8e8e]">
        <div className="flex w-[11px] shrink-0 flex-col">
          <RoundIcon label="Macros" className="text-[#8a5a18]"><circle cx="5.500" cy="5.500" r="3.800" fill="#ffad3b" stroke="none" /><path d="M3.800 7A2 2 0 1 1 7.200 7M5.500 5.500L6.500 4.500" strokeWidth="0.800" /></RoundIcon>
          <RoundIcon label="Chains" className="-mt-px text-[#777]"><circle cx="5.500" cy="5.500" r="3.800" fill="#2b2b2b" stroke="none" /><path d="M4 4.500H7M4 6.500H7" strokeWidth="0.800" /></RoundIcon>
          <RoundIcon label="Devices" className="-mt-px text-[#777]"><circle cx="5.500" cy="5.500" r="3.800" fill="#2b2b2b" stroke="none" /><rect x="3.500" y="4.500" width="4" height="2" strokeWidth="0.800" /></RoundIcon>
        </div>
        <div className="grid flex-1 grid-cols-4 grid-rows-2 gap-x-px gap-y-0.5 pb-px pr-1 pt-px">
          {MACROS.map(macro => (
            <div key={macro.name} className="flex min-w-0 flex-col items-center overflow-hidden rounded-sm border border-[#5f5f5f] bg-[#878787] text-[#1a1a1a]">
              <h3 className={clsx('h-[17px] w-full shrink-0 px-0.5 pt-px text-center font-semibold leading-[7px]', macro.color)}>{macro.name}</h3>
              <div className="pt-[3px]"><Knob label={macro.name} angle={macro.angle} /></div>
              <span className="-mt-[3px] whitespace-nowrap font-semibold leading-[7px]">{macro.value}</span>
            </div>
          ))}
        </div>
      </div>
    </section>
  );
}

function Grip() {
  return (
    <svg viewBox="0 0 4 24" className="h-6 w-1 shrink-0 self-center" aria-hidden="true">
      <path d="M1 0V24M3 0V24" stroke="#2e2e2e" strokeDasharray="1 1" />
    </svg>
  );
}

function StatusBar() {
  const box = 'h-[13px] rounded-sm border-2 border-[#565656] bg-[#878787]';
  const round = 'bg-[#4f4f4f] text-[#777]';
  return (
    <footer className="flex h-[23px] shrink-0 items-start">
      <RoundIcon label="Play" className={clsx(round, 'mt-[5px]')}><path d="M4 3L8 5.500L4 8Z" fill="currentColor" /></RoundIcon>
      <div className={clsx(box, 'ml-1.5 mt-[5px] flex-1')} />
      <div className={clsx(box, 'ml-1.5 mt-[5px] w-[124px]')} />
      <div className="ml-1.5 flex h-[18px] w-[108px] items-center gap-0.5 rounded-b-sm bg-[#565656] pl-0.5 pt-1.5 pb-0.5">
        <span className="whitespace-nowrap font-bold text-[#0c0c0c]">3-Keys-4 AM</span>
        <button className="ml-auto h-2.5 w-[50px] border-t border-[#a9bcc3] bg-[#8f8f8f] text-[5px] font-semibold leading-[10px] text-[#222]">LiveScore.Viewer</button>
        <svg viewBox="0 0 12 10" className="mr-0.5 h-2.5 w-3 shrink-0">
          <rect width="12" height="10" fill="#909090" />
          <rect y="1.500" width="12" height="2" fill="#98c48e" />
          <rect y="5.500" width="6" height="2" fill="#faf383" />
          <rect x="6" y="5.500" width="3" height="2" fill="#b8d074" />
          <rect x="9" y="5.500" width="3" height="2" fill="#fff" />
        </svg>
      </div>
      <RoundIcon label="Show devices" className={clsx(round, 'ml-1.5 mt-[5px]')}><path d="M5.500 3L8 7.500H3Z" fill="currentColor" /></RoundIcon>
    </footer>
  );
}

export default function App() {
  return (
    <div className="flex min-h-screen flex-col bg-[#6e6e6e] font-['Inter',sans-serif] text-[6px] leading-[9px] text-[#161616]">
      <Toolbar />
      <div className="flex flex-1 px-[5px] pt-px">
        <Browser />
        <Session />
        <RightStrip />
      </div>
      <div className="flex flex-col px-[5px] pt-[5px]">
        <div className="flex h-[121px] rounded-sm bg-[#565656] py-[3px] pr-0.5">
          <div className="flex w-[9px] justify-center"><Grip /></div>
          <ViewerDevice />
          <div className="flex w-[7px] justify-center"><Grip /></div>
          <RackDevice />
          <div className="flex w-1.5 items-center justify-center">
            <svg viewBox="0 0 4 24" className="h-6 w-1"><path d="M1 3V24M3 3V24M1 0V1M3 0V1" stroke="#2e2e2e" /></svg>
          </div>
          <div className="flex w-[259px] shrink-0 items-center justify-center bg-[#878787] font-semibold text-[#1f1f1f]">
            Drop an Instrument or Sample Here
          </div>
        </div>
        <StatusBar />
      </div>
    </div>
  );
}
